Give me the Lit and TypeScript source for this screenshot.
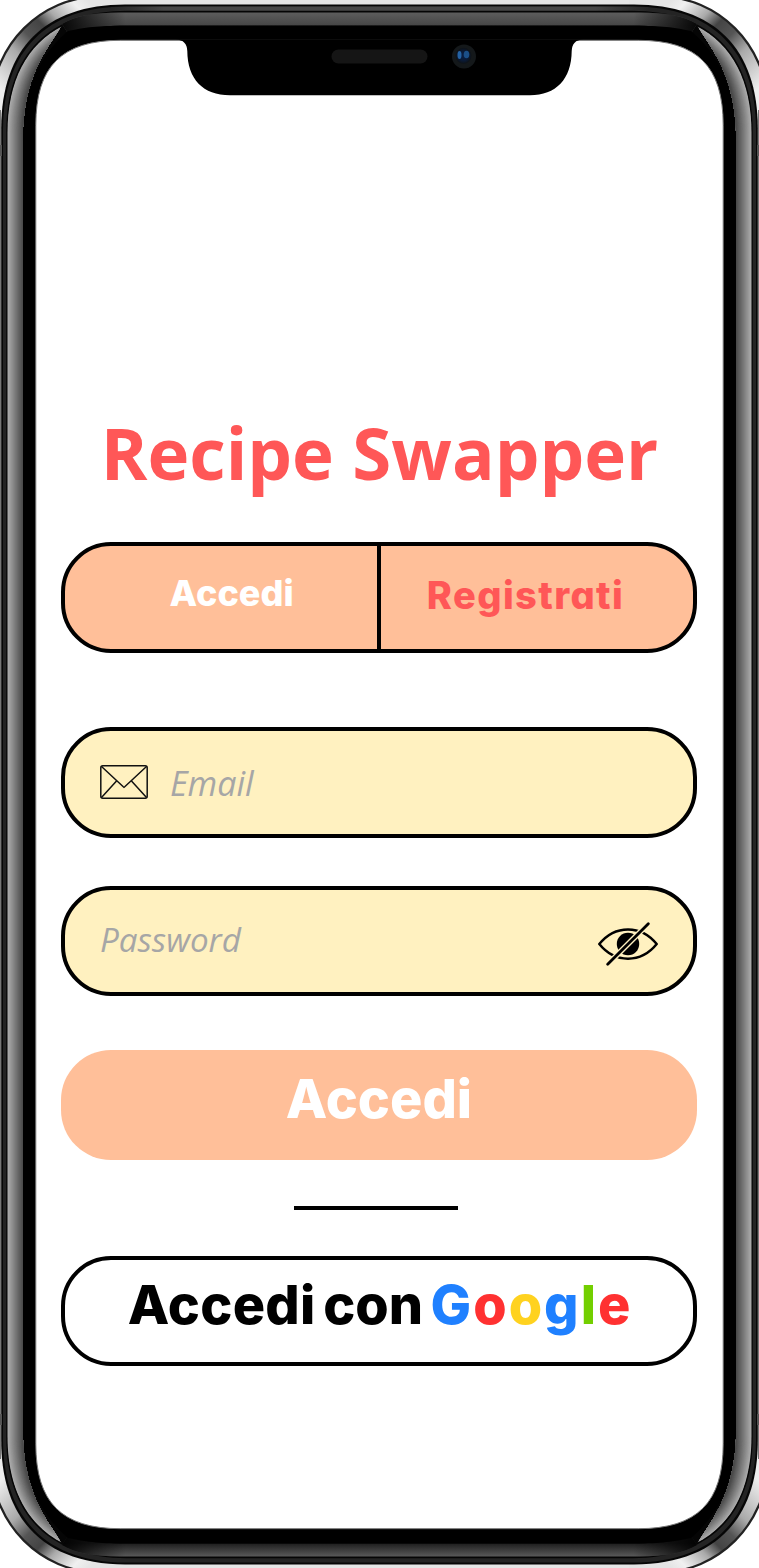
import { LitElement, html, svg, css } from "lit";
import { customElement } from "lit/decorators.js";

const W = 759;
const H = 1569;

const MIRRORS = ["", "matrix(-1 0 0 1 759 0)", "matrix(1 0 0 -1 0 1569)", "matrix(-1 0 0 -1 759 1569)"];

/** Rounded rectangle with softly eased corners, inset x / y from the frame box. */
function shell(x: number, y: number, c: number, k: number): string {
  const r = W - x;
  const b = H - y;
  return (
    `M${x} ${y + c}C${x} ${y + k} ${x + k} ${y} ${x + c} ${y}H${r - c}` +
    `C${r - k} ${y} ${r} ${y + k} ${r} ${y + c}V${b - c}` +
    `C${r} ${b - k} ${r - k} ${b} ${r - c} ${b}H${x + c}` +
    `C${x + k} ${b} ${x} ${b - k} ${x} ${b - c}Z`
  );
}

@customElement("phone-frame")
export class PhoneFrame extends LitElement {
  static styles = css`
    :host {
      display: block;
    }
    .art {
      display: block;
      width: 759px;
      height: 1568px;
    }
  `;

  /** Silver reflection running round each outer corner. */
  private glints() {
    return MIRRORS.map(
      (t) => svg`<g transform=${t}>
        <path d="M-8 130V-8H130V5H125C50 5 2 50 2 130Z" fill="url(#glint)" clip-path="url(#outer)"/>
      </g>`
    );
  }

  /** Side bevel: nested shells going from light to dark, cut to a crescent. */
  private bevel() {
    const steps = Array.from({ length: 31 }, (_, i) => i / 2);
    return svg`<g clip-path="url(#crescents)">
      ${steps.map((i) => {
        const g = Math.round(172 - i * 6.6);
        return svg`<path d=${shell(7.5 + i, 12 + i, 121 - i * 0.8, 43 - i * 0.7)} fill=${`rgb(${g},${g},${g})`}/>`;
      })}
    </g>`;
  }

  render() {
    const topBand =
      "M62 24C75 16 94 12.500 120 12.500H639C665 12.500 684 16 697 24L690 35C675 28 655 25.500 630 25.500H129C104 25.500 84 28 69 35Z";
    return html`<svg class="art" viewBox="0 0 759 1568" aria-hidden="true">
      <defs>
        <clipPath id="outer"><path d=${shell(-8, -3.5, 108, 49)} /></clipPath>
        <clipPath id="crescents">
          ${MIRRORS.map(
            (t) => svg`<path transform=${t} d="M7 785V125C7 80 25 40 63 23.500C47 50 22.700 75 22.700 142V785Z"/>`
          )}
        </clipPath>
        <linearGradient id="glint" gradientUnits="userSpaceOnUse" x1="0" y1="88" x2="88" y2="0">
          <stop offset="0" stop-color="#eee" />
          <stop offset=".3" stop-color="#aaa" />
          <stop offset=".46" stop-color="#555" />
          <stop offset=".6" stop-color="#444" />
          <stop offset=".72" stop-color="#aaa" />
          <stop offset=".9" stop-color="#f0f0f0" />
          <stop offset="1" stop-color="#e4e4e4" />
        </linearGradient>
        <linearGradient id="fade" x1="0" x2="1" y1="0" y2="0">
          <stop offset="0" stop-color="#000" stop-opacity=".9" />
          <stop offset=".1" stop-color="#000" stop-opacity="0" />
          <stop offset=".9" stop-color="#000" stop-opacity="0" />
          <stop offset="1" stop-color="#000" stop-opacity=".9" />
        </linearGradient>
        <linearGradient id="lip" x1="0" x2="1" y1="0" y2="0">
          <stop offset="0" stop-color="#484848" stop-opacity="0" />
          <stop offset=".1" stop-color="#484848" />
          <stop offset=".9" stop-color="#484848" />
          <stop offset="1" stop-color="#484848" stop-opacity="0" />
        </linearGradient>
        <linearGradient id="top" x1="0" x2="0" y1="12" y2="26" gradientUnits="userSpaceOnUse">
          <stop offset="0" stop-color="#5e5e5e" />
          <stop offset="1" stop-color="#454545" />
        </linearGradient>
        <linearGradient id="bottom" x1="0" x2="0" y1="12" y2="26" gradientUnits="userSpaceOnUse">
          <stop offset="0" stop-color="#5c5c5c" />
          <stop offset="1" stop-color="#1c1c1c" />
        </linearGradient>
        <radialGradient id="lens">
          <stop offset="0" stop-color="#0a1f45" />
          <stop offset=".6" stop-color="#0a1a36" />
          <stop offset="1" stop-color="#0e1216" />
        </radialGradient>
      </defs>

      <path d=${shell(-8, -3.5, 108, 49)} fill="#e6e6e6" />
      ${this.glints()}
      <path d=${shell(-8, -3.5, 108, 49)} fill="none" stroke="#222" stroke-width="2.200" />
      <path d="M0 110V1459M759 110V1459" stroke="#777" stroke-width="2" />
      <path d=${shell(1.2, 4.6, 124, 44)} fill="#060606" />
      <path d=${shell(3, 6.4, 123, 44)} fill="#242424" />
      <path d="M110 6.500H649V11H110Z" fill="url(#lip)" />
      <path d=${shell(6.3, 10.8, 121, 43)} fill="#050505" />
      <path d=${topBand} fill="url(#top)" />
      <path d=${topBand} fill="url(#fade)" />
      <g transform="matrix(1 0 0 -1 0 1569)">
        <path d=${topBand} fill="url(#bottom)" />
        <path d=${topBand} fill="url(#fade)" />
      </g>
      <path
        d="M23 142C23 75 50 47 68 31C90 26.500 100 25.800 129 25.800H630C659 25.800 669 26.500 691 31C709 47 736 75 736 142V1427C736 1494 709 1522 691 1538C669 1542.500 659 1543.500 630 1543.500H129C100 1543.500 90 1542.500 68 1538C50 1522 23 1494 23 1427Z"
        fill="#000"
      />
      ${this.bevel()}
      <path d=${shell(35.8, 40.3, 85, 26)} fill="#fff" stroke="#777" stroke-width="1" />
      <path
        d="M176 39.500Q187 40 187.300 51C187.500 79 203 95.300 230 95.300H530C556 95.300 571.500 79 571.700 51Q572 40 583 39.500Z"
        fill="#000"
      />
      <rect x="331.500" y="49.500" width="96" height="14" rx="7" fill="#151515" />
      <circle cx="464" cy="56.500" r="12" fill="#14181a" />
      <circle cx="463.500" cy="55.800" r="8" fill="url(#lens)" />
      <ellipse cx="459.500" cy="55" rx="2" ry="4" fill="#2462a4" />
      <ellipse cx="466.500" cy="54.500" rx="2.800" ry="3.800" fill="#1b4f88" />
      <path d="M0 145V156M759 145V156M0 1414V1425M759 1414V1425" stroke="#555" stroke-width="4" />
    </svg>`;
  }
}

@customElement("app-root")
export class AppRoot extends LitElement {
  static styles = css`
    :host {
      display: block;
      position: relative;
      width: 759px;
      height: 1568px;
      overflow: hidden;
      background: #fff;
      font-family: "Open Sans", "Noto Sans", sans-serif;
    }
    .frame {
      position: absolute;
      inset: 0;
    }
    .screen {
      position: relative;
      box-sizing: border-box;
      height: 1568px;
      padding: 404px 62px 0 61px;
      display: flex;
      flex-direction: column;
    }
    .title {
      margin: 0;
      height: 138px;
      line-height: 97px;
      font-size: 70.800px;
      font-weight: 700;
      text-align: center;
      padding-left: 1px;
      white-space: nowrap;
      color: #ff5757;
    }
    .pill {
      box-sizing: border-box;
      width: 636px;
      height: 110.500px;
      border: 4px solid #000;
      border-radius: 50px;
      display: flex;
      margin: 0;
      padding: 0;
      background: none;
    }
    .round {
      font-family: Inter, Lato, sans-serif;
      font-feature-settings: "cv11" 1;
      font-weight: 800;
      white-space: nowrap;
    }
    .tabs {
      background: #ffbf99;
    }
    .tab {
      box-sizing: border-box;
      width: 312px;
      text-align: center;
    }
    .login {
      font-size: 36px;
      line-height: 95px;
      color: #fff;
      padding-left: 21px;
    }
    .divider {
      width: 4px;
      margin: -4px 0;
      background: #000;
    }
    .register {
      font-size: 38px;
      letter-spacing: 1.400px;
      line-height: 98px;
      color: #ff5757;
      padding-right: 23px;
    }
    .field {
      background: #fff1c0;
      align-items: center;
      padding: 0 35px;
    }
    .email {
      margin-top: 74.500px;
    }
    .password {
      margin-top: 48px;
      justify-content: space-between;
    }
    .hint {
      font-size: 34px;
      line-height: 46px;
      font-style: italic;
      color: #a6a6a6;
    }
    .email .hint {
      margin-top: 1px;
    }
    .password .hint {
      font-size: 33.200px;
      margin-bottom: 2px;
    }
    .mail {
      width: 48px;
      height: 34px;
      margin: 0 22px 0 0;
    }
    .eye {
      width: 60px;
      height: 44px;
      margin-top: 6px;
    }
    .submit {
      margin-top: 53.500px;
      border: 0;
      background: #ffbf99;
      justify-content: center;
      color: #fff;
      font-size: 54px;
      line-height: 97px;
    }
    .rule {
      width: 164px;
      height: 4px;
      margin: 45.500px 0 46px 233px;
      background: #000;
    }
    .google {
      background: #fff;
      justify-content: center;
      gap: 7.500px;
      color: #000;
      font-size: 54px;
      line-height: 89px;
    }
    .word {
      letter-spacing: 0.300px;
    }
    .brand {
      letter-spacing: 2px;
      margin-right: -2px;
    }
    .blue {
      color: #1f80ff;
    }
    .red {
      color: #ff3131;
    }
    .yellow {
      color: #ffd21f;
    }
    .green {
      color: #73cf00;
    }
  `;

  render() {
    const letters = [
      ["G", "blue"],
      ["o", "red"],
      ["o", "yellow"],
      ["g", "blue"],
      ["l", "green"],
      ["e", "red"],
    ];
    return html`
      <phone-frame class="frame"></phone-frame>
      <main class="screen">
        <h1 class="title">Recipe Swapper</h1>
        <nav class="pill tabs round">
          <span class="tab login">Accedi</span>
          <span class="divider"></span>
          <span class="tab register">Registrati</span>
        </nav>
        <div class="pill field email">
          <svg class="mail" viewBox="0 0 48 34" fill="none" stroke="#111" stroke-width="1.500">
            <rect x=".8" y=".8" width="46.400" height="32.400" rx="2" />
            <path d="M1.500 1.500L23 21.500L24 22.300L25 21.500L46.500 1.500M1.500 32.500L16.500 16M46.500 32.500L31.500 16" />
          </svg>
          <span class="hint">Email</span>
        </div>
        <div class="pill field password">
          <span class="hint">Password</span>
          <svg class="eye" viewBox="0 0 60 44" fill="none" stroke-linecap="round">
            <path
              d="M1.300 22C17 2.500 43 2.500 58.700 22C43 41.500 17 41.500 1.300 22Z"
              stroke="#000"
              stroke-width="2.500"
              stroke-linejoin="round"
            />
            <circle cx="30" cy="22" r="11.200" fill="#000" />
            <path d="M10.500 41.500L49.500 2.500" stroke="#fff1c0" stroke-width="5.400" stroke-linecap="butt" />
            <path d="M9.700 42.300L50.300 1.700" stroke="#000" stroke-width="2.800" />
          </svg>
        </div>
        <div class="pill submit round"><span class="go">Accedi</span></div>
        <div class="rule"></div>
        <div class="pill google round">
          <span class="word">Accedi</span>
          <span class="con">con</span>
          <span class="brand">${letters.map(([l, c]) => html`<span class=${c}>${l}</span>`)}</span>
        </div>
      </main>
    `;
  }
}
